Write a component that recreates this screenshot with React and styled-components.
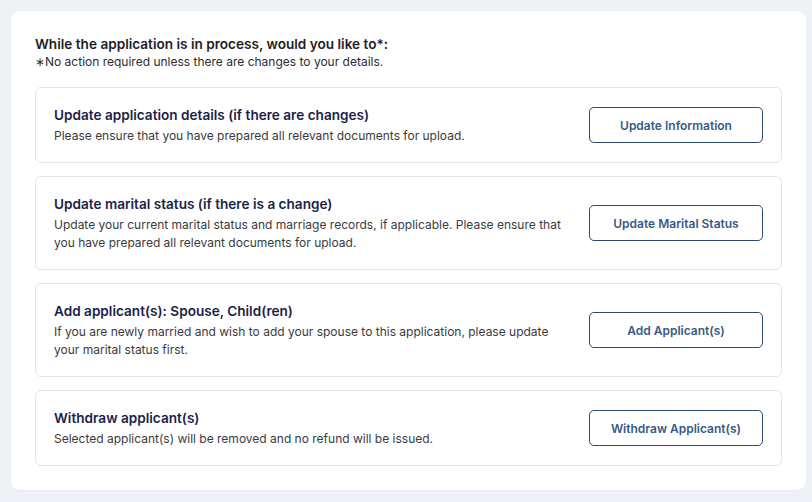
import React from "react";
import styled, { createGlobalStyle } from "styled-components";

const GlobalStyle = createGlobalStyle`
  html, body {
    margin: 0;
    padding: 0;
    background: #eef2f7;
    font-family: Inter, "Noto Sans", "Liberation Sans", sans-serif;
  }
`;

const Page = styled.div`
  padding: 11px 6px 11px 11px;
`;

const Panel = styled.section`
  background: #ffffff;
  border-radius: 9px;
  padding: 23px 24px 24px 24px;
  box-shadow: 0 1px 2px rgba(30, 50, 80, 0.04);
`;

const Heading = styled.h2`
  margin: 0;
  font-size: 13.6px;
  line-height: 20px;
  font-weight: 600;
  color: #1e1e24;
`;

const Note = styled.p`
  margin: 0 0 17px 0;
  font-size: 12px;
  line-height: 16px;
  color: #2c2c30;
`;

const List = styled.div`
  display: flex;
  flex-direction: column;
  gap: 13px;
`;

const OptionCard = styled.div`
  display: flex;
  align-items: center;
  justify-content: space-between;
  gap: 24px;
  border: 1px solid #e2e4e8;
  border-radius: 6px;
  padding: 17px 18px 17px 18px;
`;

const Texts = styled.div`
  flex: 1;
  max-width: 515px;
`;

const Title = styled.h3`
  margin: 0 0 2px 0;
  font-size: 13.6px;
  line-height: 20px;
  font-weight: 600;
  color: #1c1f4a;
`;

const Desc = styled.p`
  margin: 0;
  font-size: 12px;
  line-height: 18px;
  color: #3a3a3e;
`;

const ActionButton = styled.button`
  flex: none;
  width: 174px;
  height: 36px;
  background: #ffffff;
  border: 1px solid #2e4a6d;
  border-radius: 5px;
  font-family: inherit;
  font-size: 12px;
  font-weight: 600;
  color: #375a86;
  cursor: pointer;
`;

const options = [
  {
    title: "Update application details (if there are changes)",
    desc: "Please ensure that you have prepared all relevant documents for upload.",
    action: "Update Information",
  },
  {
    title: "Update marital status (if there is a change)",
    desc: "Update your current marital status and marriage records, if applicable. Please ensure that you have prepared all relevant documents for upload.",
    action: "Update Marital Status",
  },
  {
    title: "Add applicant(s): Spouse, Child(ren)",
    desc: "If you are newly married and wish to add your spouse to this application, please update your marital status first.",
    action: "Add Applicant(s)",
  },
  {
    title: "Withdraw applicant(s)",
    desc: "Selected applicant(s) will be removed and no refund will be issued.",
    action: "Withdraw Applicant(s)",
  },
];

function App() {
  return (
    <>
      <GlobalStyle />
      <Page>
        <Panel>
          <Heading>While the application is in process, would you like to*:</Heading>
          <Note>∗No action required unless there are changes to your details.</Note>
          <List>
            {options.map((item) => (
              <OptionCard key={item.action}>
                <Texts>
                  <Title>{item.title}</Title>
                  <Desc>{item.desc}</Desc>
                </Texts>
                <ActionButton>{item.action}</ActionButton>
              </OptionCard>
            ))}
          </List>
        </Panel>
      </Page>
    </>
  );
}

export default App;
